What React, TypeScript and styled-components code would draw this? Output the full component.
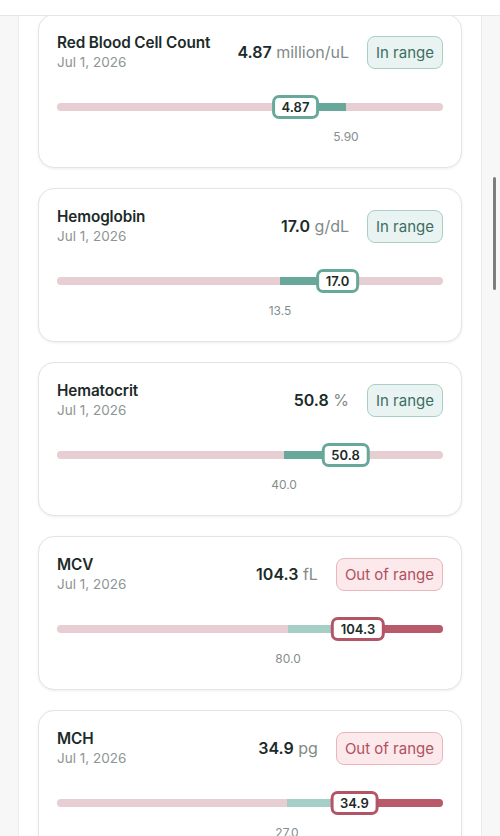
import React from "react";
import styled, { createGlobalStyle } from "styled-components";

const Global = createGlobalStyle`
  html, body { margin: 0; padding: 0; background: #f7f7f7; }
  body { font-family: Inter, "Noto Sans", sans-serif; -webkit-font-smoothing: antialiased; }
`;

const TOP = 15;

const Header = styled.div`
  position: fixed;
  top: 0;
  left: 0;
  right: 0;
  height: ${TOP}px;
  background: #ffffff;
  border-bottom: 1px solid #e6e6e6;
  z-index: 5;
`;

const Scroll = styled.div`
  position: fixed;
  right: 4px;
  top: 177px;
  width: 3px;
  height: 113px;
  border-radius: 2px;
  background: #7d7d7d;
  z-index: 6;
`;

const Column = styled.main`
  width: 464px;
  margin: 0 0 0 18px;
  min-height: 836px;
  background: #ffffff;
  border-left: 1px solid #ebebeb;
  border-right: 1px solid #ebebeb;
  padding: 14px 19px 20px;
  box-sizing: border-box;
  display: flex;
  flex-direction: column;
  gap: 20px;
`;

const Card = styled.section`
  background: #ffffff;
  border: 1px solid #e4e4e4;
  border-radius: 16px;
  box-shadow: 0 1px 3px rgba(0, 0, 0, 0.07);
  padding: 18px 18px 22px;
  display: flex;
  flex-direction: column;
`;

const Head = styled.div`
  display: flex;
  align-items: center;
  justify-content: space-between;
`;

const Names = styled.div`
  display: flex;
  flex-direction: column;
`;

const Title = styled.div`
  font-size: 15.3px;
  line-height: 20px;
  font-weight: 600;
  color: #1c2b29;
  letter-spacing: -0.1px;
`;

const DateText = styled.div`
  font-size: 13.5px;
  line-height: 18px;
  color: #8d9594;
`;

const Right = styled.div`
  display: flex;
  align-items: center;
  gap: 18px;
`;

const Value = styled.div`
  font-size: 16px;
  line-height: 20px;
  color: #1c2b29;
  white-space: nowrap;
  b { font-weight: 600; }
  span { color: #7f8a89; font-weight: 400; }
`;

const Badge = styled.div<{ $out: boolean }>`
  height: 33px;
  box-sizing: border-box;
  padding: 0 8px;
  display: flex;
  align-items: center;
  border-radius: 8px;
  font-size: 15px;
  border: 1px solid ${(p) => (p.$out ? "#e8b6bd" : "#a9cfc7")};
  background: ${(p) => (p.$out ? "#fce9eb" : "#e9f4f2")};
  color: ${(p) => (p.$out ? "#b0505f" : "#3e6d64")};
`;

const Track = styled.div`
  position: relative;
  height: 24px;
  margin-top: 24px;
`;

const Bar = styled.div`
  position: absolute;
  left: 0;
  right: 0;
  top: 8px;
  height: 8px;
  border-radius: 4px;
  background: #e6ced2;
  overflow: hidden;
`;

const Segment = styled.div<{ $tone: "teal" | "soft" | "red" }>`
  position: absolute;
  top: 0;
  bottom: 0;
  background: ${(p) =>
    p.$tone === "teal" ? "#68a89b" : p.$tone === "soft" ? "#a5cfc6" : "#b85a6a"};
`;

const Marker = styled.div<{ $out: boolean }>`
  position: absolute;
  top: 0;
  height: 24px;
  box-sizing: border-box;
  transform: translateX(-50%);
  padding: 0 7px;
  display: flex;
  align-items: center;
  background: #ffffff;
  border: 3px solid ${(p) => (p.$out ? "#b45567" : "#68a89b")};
  border-radius: 7px;
  font-size: 13px;
  font-weight: 600;
  color: #1c2b29;
  white-space: nowrap;
`;

const Labels = styled.div`
  position: relative;
  height: 16px;
  margin-top: 10px;
`;

const Tick = styled.div`
  position: absolute;
  top: 0;
  transform: translateX(-50%);
  font-size: 12px;
  line-height: 16px;
  color: #858d8c;
`;

type Seg = { from: number; to: number; tone: "teal" | "soft" | "red" };
type Item = {
  name: string;
  value: string;
  unit: string;
  out: boolean;
  segs: Seg[];
  marker: number;
  tick: number;
  tickLabel: string;
};

const W = 386;

const items: Item[] = [
  {
    name: "Red Blood Cell Count",
    value: "4.87",
    unit: "million/uL",
    out: false,
    segs: [{ from: 225, to: 289, tone: "teal" }],
    marker: 238.5,
    tick: 289,
    tickLabel: "5.90",
  },
  {
    name: "Hemoglobin",
    value: "17.0",
    unit: "g/dL",
    out: false,
    segs: [{ from: 223, to: 275, tone: "teal" }],
    marker: 280.5,
    tick: 223,
    tickLabel: "13.5",
  },
  {
    name: "Hematocrit",
    value: "50.8",
    unit: "%",
    out: false,
    segs: [{ from: 227, to: 280, tone: "teal" }],
    marker: 288.5,
    tick: 227,
    tickLabel: "40.0",
  },
  {
    name: "MCV",
    value: "104.3",
    unit: "fL",
    out: true,
    segs: [
      { from: 231, to: 283, tone: "soft" },
      { from: 283, to: 386, tone: "red" },
    ],
    marker: 301,
    tick: 231,
    tickLabel: "80.0",
  },
  {
    name: "MCH",
    value: "34.9",
    unit: "pg",
    out: true,
    segs: [
      { from: 230, to: 278, tone: "soft" },
      { from: 278, to: 386, tone: "red" },
    ],
    marker: 297.5,
    tick: 230,
    tickLabel: "27.0",
  },
];

const pct = (v: number) => `${(v / W) * 100}%`;

export default function App() {
  return (
    <>
      <Global />
      <Header />
      <Scroll />
      <Column>
        {items.map((it) => (
          <Card key={it.name}>
            <Head>
              <Names>
                <Title>{it.name}</Title>
                <DateText>Jul 1, 2026</DateText>
              </Names>
              <Right>
                <Value>
                  <b>{it.value}</b> <span>{it.unit}</span>
                </Value>
                <Badge $out={it.out}>{it.out ? "Out of range" : "In range"}</Badge>
              </Right>
            </Head>
            <Track>
              <Bar>
                {it.segs.map((s, i) => (
                  <Segment
                    key={i}
                    $tone={s.tone}
                    style={{ left: pct(s.from), width: pct(s.to - s.from) }}
                  />
                ))}
              </Bar>
              <Marker $out={it.out} style={{ left: pct(it.marker) }}>
                {it.value}
              </Marker>
            </Track>
            <Labels>
              <Tick style={{ left: pct(it.tick) }}>{it.tickLabel}</Tick>
            </Labels>
          </Card>
        ))}
      </Column>
    </>
  );
}
